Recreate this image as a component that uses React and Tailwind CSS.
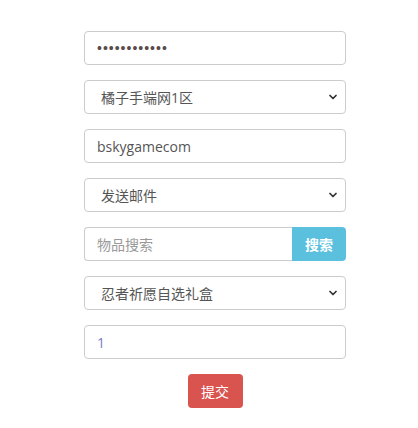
import React from 'react'
import { ChevronDown } from 'lucide-react'

const font = { fontFamily: '"Open Sans", "Noto Sans CJK SC", sans-serif' }

function SelectBox({ value }) {
  return (
    <div className="relative h-[34px]">
      <select
        defaultValue={value}
        className="appearance-none w-full h-full border border-[#ccc] rounded-[4px] bg-white pl-4 pr-8 text-[14px] text-[#555] outline-none"
      >
        <option>{value}</option>
      </select>
      <ChevronDown
        size={12}
        strokeWidth={3.5}
        className="absolute right-[7px] top-[11px] text-[#333] pointer-events-none"
      />
    </div>
  )
}

export default function App() {
  return (
    <div className="w-[418px] h-[428px] bg-white" style={font}>
      <div className="ml-[84px] w-[262px] pt-[31px] flex flex-col gap-[15px]">
        <input
          type="password"
          defaultValue="bskygame.com"
          className="h-[34px] border border-[#ccc] rounded-[4px] px-3 text-[14px] text-[#5a4a4a] tracking-[1px] outline-none font-['Liberation_Sans',sans-serif]"
        />
        <SelectBox value="橘子手端网1区" />
        <input
          type="text"
          defaultValue="bskygamecom"
          className="h-[34px] border border-[#ccc] rounded-[4px] px-3 text-[14px] text-[#555] outline-none"
        />
        <SelectBox value="发送邮件" />
        <div className="flex h-[34px]">
          <input
            type="text"
            placeholder="物品搜索"
            className="flex-1 min-w-0 border border-[#ccc] border-r-0 rounded-l-[4px] px-3 text-[14px] text-[#555] placeholder:text-[#999] outline-none"
          />
          <button className="w-[54px] bg-[#5bc0de] rounded-r-[4px] text-white text-[14px] font-bold">
            搜索
          </button>
        </div>
        <SelectBox value="忍者祈愿自选礼盒" />
        <input
          type="text"
          defaultValue="1"
          className="h-[34px] border border-[#ccc] rounded-[4px] px-3 text-[14px] text-[#7b7bc8] outline-none"
        />
        <div className="flex justify-center">
          <button className="w-[55px] h-[34px] bg-[#d9534f] rounded-[4px] text-white text-[14px]">
            提交
          </button>
        </div>
      </div>
    </div>
  )
}
